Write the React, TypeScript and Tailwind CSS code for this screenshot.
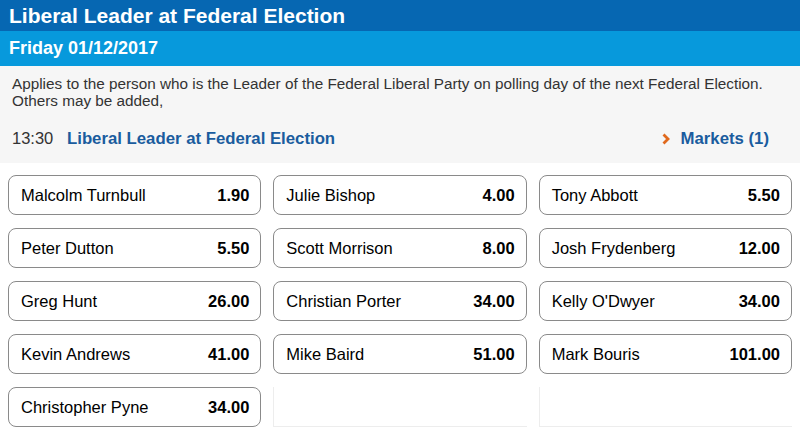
import React from "react"

interface Runner {
	name: string
	price: string
}

const runners: Runner[] = [
	{ name: "Malcolm Turnbull", price: "1.90" },
	{ name: "Julie Bishop", price: "4.00" },
	{ name: "Tony Abbott", price: "5.50" },
	{ name: "Peter Dutton", price: "5.50" },
	{ name: "Scott Morrison", price: "8.00" },
	{ name: "Josh Frydenberg", price: "12.00" },
	{ name: "Greg Hunt", price: "26.00" },
	{ name: "Christian Porter", price: "34.00" },
	{ name: "Kelly O'Dwyer", price: "34.00" },
	{ name: "Kevin Andrews", price: "41.00" },
	{ name: "Mike Baird", price: "51.00" },
	{ name: "Mark Bouris", price: "101.00" },
	{ name: "Christopher Pyne", price: "34.00" },
]

const RunnerButton: React.FC<{ runner: Runner }> = ({ runner }) => (
	<button className="flex h-10 items-center justify-between rounded-lg border-[1.5px] border-[#8a8a8a] bg-white pl-3 pr-[11px] text-[16.5px] text-black">
		<span>{runner.name}</span>
		<span className="font-bold">{runner.price}</span>
	</button>
)

export default function App() {
	return (
		<div className="h-[438px] w-[800px] overflow-hidden bg-white font-['Liberation_Sans',Arial,sans-serif]">
			<div className="flex h-[31px] items-center bg-[#0667b2] px-[9px] text-[21px] font-bold text-white">
				Liberal Leader at Federal Election
			</div>
			<div className="flex h-[35px] items-center bg-[#0799dc] px-[9px] text-[18px] font-bold text-white">
				Friday 01/12/2017
			</div>
			<div className="h-[97px] bg-[#f6f6f6] px-3 pt-[9px] text-[15.3px] leading-[17px] text-[#333]">
				<p>
					Applies to the person who is the Leader of the Federal Liberal Party on polling day of the next Federal Election.
					<br />
					Others may be added,
				</p>
				<div className="mt-[21px] flex items-center">
					<span className="w-[55px] text-[16.5px]">13:30</span>
					<span className="text-[16.75px] font-bold text-[#1a5c9e]">Liberal Leader at Federal Election</span>
					<span className="ml-auto mr-[19px] flex items-center gap-[11px] text-[16.75px] font-bold text-[#1a5c9e]">
						<svg width="8" height="12" viewBox="0 0 8 12">
							<path d="M1.5 1.5 L6 6 L1.5 10.5" fill="none" stroke="#e0691d" strokeWidth="2.8" />
						</svg>
						Markets (1)
					</span>
				</div>
			</div>
			<div className="grid grid-cols-3 gap-x-3 gap-y-[13px] px-2 pt-3">
				{runners.map((runner) => (
					<RunnerButton key={runner.name} runner={runner} />
				))}
				<div className="h-10 border-b border-l border-[#ededed]" />
				<div className="h-10 border-b border-l border-[#ededed]" />
			</div>
		</div>
	)
}
